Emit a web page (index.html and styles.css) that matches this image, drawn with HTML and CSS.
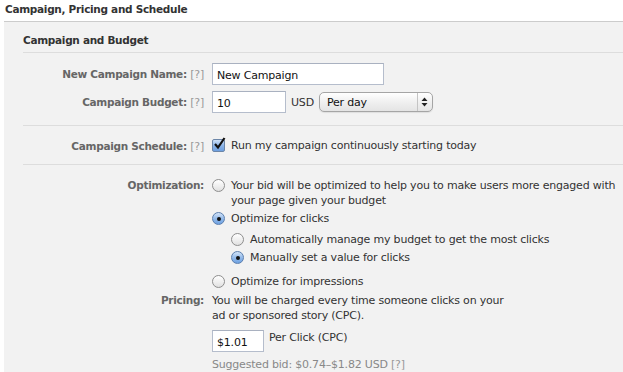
FILE: index.html
```html
<!DOCTYPE html>
<html lang="en">
<head>
    <meta charset="UTF-8">
    <title>Campaign, Pricing and Schedule</title>
    <link rel="stylesheet" href="styles.css">
</head>
<body>
    <h2 class="title">Campaign, Pricing and Schedule</h2>

    <div class="panel">
        <h3 class="section-title">Campaign and Budget</h3>

        <div class="group">
            <div class="row">
                <div class="label">New Campaign Name: <span class="help">[?]</span></div>
                <div class="field"><input type="text" class="text-input name-input" value="New Campaign"></div>
            </div>
            <div class="row">
                <div class="label">Campaign Budget: <span class="help">[?]</span></div>
                <div class="field">
                    <input type="text" class="text-input budget-input" value="10">
                    <span class="currency">USD</span>
                    <div class="select">
                        <span>Per day</span>
                        <span class="select-arrows">
                            <svg width="7" height="10" viewBox="0 0 7 10"><path d="M3.5 0.5 L6.5 4 L0.5 4 Z M0.5 6 L6.5 6 L3.5 9.5 Z" fill="#222"/></svg>
                        </span>
                    </div>
                </div>
            </div>
        </div>

        <div class="group group-check">
            <div class="row row-check">
                <div class="label">Campaign Schedule: <span class="help">[?]</span></div>
                <div class="field">
                    <label class="option">
                        <span class="checkbox">
                            <svg width="14" height="14" viewBox="0 0 14 14"><path d="M3 7 L6 10.5 L12.5 1" fill="none" stroke="#111" stroke-width="2.2"/></svg>
                        </span>
                        Run my campaign continuously starting today
                    </label>
                </div>
            </div>
        </div>

        <div class="group group-last">
            <div class="row">
                <div class="label">Optimization:</div>
                <div class="field options">
                    <label class="option">
                        <span class="radio"></span>
                        <span>Your bid will be optimized to help you to make users more engaged with your page given your budget</span>
                    </label>
                    <label class="option">
                        <span class="radio checked"></span>
                        <span>Optimize for clicks</span>
                    </label>
                    <div class="sub-options">
                        <label class="option">
                            <span class="radio"></span>
                            <span>Automatically manage my budget to get the most clicks</span>
                        </label>
                        <label class="option">
                            <span class="radio checked"></span>
                            <span>Manually set a value for clicks</span>
                        </label>
                    </div>
                    <label class="option">
                        <span class="radio"></span>
                        <span>Optimize for impressions</span>
                    </label>
                </div>
            </div>
            <div class="row">
                <div class="label">Pricing:</div>
                <div class="field pricing">
                    <p class="pricing-text">You will be charged every time someone clicks on your ad or sponsored story (CPC).</p>
                    <div class="bid">
                        <input type="text" class="text-input bid-input" value="$1.01">
                        <span>Per Click (CPC)</span>
                    </div>
                    <p class="suggested">Suggested bid: $0.74–$1.82 USD <span class="help">[?]</span></p>
                </div>
            </div>
        </div>
    </div>
</body>
</html>
```

FILE: styles.css
```css
body {
    margin: 0;
    font-family: "DejaVu Sans", sans-serif;
    font-size: 11px;
    letter-spacing: -0.2px;
    color: #333;
    background: white;
    overflow: hidden;
}
.title,
.section-title,
.label {
    font-size: 10.5px;
    letter-spacing: -0.3px;
    font-weight: bold;
}
.title {
    margin: 0;
    padding: 3px 5px 0;
    height: 18px;
    color: #333;
}
.panel {
    width: 660px;
    margin-left: 4px;
    border-top: 1px solid #ccc;
    background: #f2f2f2;
    padding: 0 0 0 19px;
    height: 400px;
}
.section-title {
    margin: 0;
    padding: 12px 0 0 0;
    height: 18px;
    color: #333;
}
.group {
    border-top: 1px solid #ddd;
    padding: 10px 0 12px;
    display: flex;
    flex-direction: column;
    gap: 6px;
}
.group-check {
    padding-top: 12px;
    padding-bottom: 10px;
}
.group-last {
    padding-top: 13px;
    gap: 4px;
}
.row {
    display: grid;
    grid-template-columns: 181px 1fr;
    column-gap: 8px;
    align-items: start;
}
.label {
    text-align: right;
    color: #666;
    line-height: 22px;
    height: 22px;
}
.row-check .label {
    line-height: 16px;
    height: 16px;
}
.group-last .label {
    line-height: 15px;
    height: auto;
}
.help {
    font-size: 11px;
    line-height: 0;
    letter-spacing: -0.2px;
    font-weight: normal;
    color: #999;
}
.field {
    display: flex;
    align-items: center;
    gap: 5px;
}
.text-input {
    box-sizing: border-box;
    height: 22px;
    border: 1px solid #b5bdcc;
    border-top-color: #a9b1c0;
    background: white;
    padding: 2px 4px 0;
    font-family: inherit;
    font-size: 11px;
    letter-spacing: -0.2px;
    color: #111;
    margin: 0;
    outline: none;
}
.name-input { width: 172px; }
.budget-input { width: 74px; }
.bid-input { width: 52px; }
.select {
    box-sizing: border-box;
    width: 114px;
    height: 20px;
    border: 1px solid #a5a5a5;
    border-radius: 5px;
    background: linear-gradient(#ffffff, #f0f0f0 50%, #e4e4e4);
    display: flex;
    align-items: center;
    justify-content: space-between;
    padding-left: 7px;
    color: #111;
    box-shadow: 0 1px 1px rgba(0, 0, 0, 0.08);
}
.select-arrows {
    height: 100%;
    width: 14px;
    border-left: 1px solid #c4c4c4;
    display: flex;
    align-items: center;
    justify-content: center;
}
.options {
    flex-direction: column;
    align-items: stretch;
    gap: 3px;
    max-width: 412px;
}
.option {
    display: flex;
    align-items: flex-start;
    gap: 6px;
    line-height: 15px;
    color: #333;
}
.sub-options {
    padding: 3px 0 6px 19px;
    display: flex;
    flex-direction: column;
    gap: 3px;
}
.checkbox {
    box-sizing: border-box;
    flex: none;
    width: 13px;
    height: 13px;
    margin-top: 1px;
    border: 1px solid #6c86a8;
    border-radius: 2px;
    background: linear-gradient(#cfe1f7, #8db5e8 50%, #6d9fe0);
    position: relative;
}
.checkbox svg {
    position: absolute;
    left: -1px;
    top: -3px;
}
.radio {
    box-sizing: border-box;
    flex: none;
    width: 13px;
    height: 13px;
    margin-top: 1px;
    border: 1px solid #8e8e8e;
    border-radius: 50%;
    background: linear-gradient(#ffffff, #ededed 60%, #e0e0e0);
    position: relative;
}
.radio.checked {
    border-color: #5b7fae;
    background: linear-gradient(#d3e4f8, #95bbea 50%, #6fa2e2);
}
.radio.checked::after {
    content: "";
    position: absolute;
    left: 3.5px;
    top: 3.5px;
    width: 4px;
    height: 4px;
    border-radius: 50%;
    background: #111;
}
.pricing {
    flex-direction: column;
    align-items: flex-start;
    gap: 0;
}
.pricing-text {
    margin: 0;
    line-height: 15px;
    width: 300px;
}
.bid {
    display: flex;
    align-items: flex-start;
    gap: 5px;
    margin-top: 7px;
    line-height: 15px;
}
.suggested {
    margin: 5px 0 0;
    color: #888;
    line-height: 15px;
}
```
